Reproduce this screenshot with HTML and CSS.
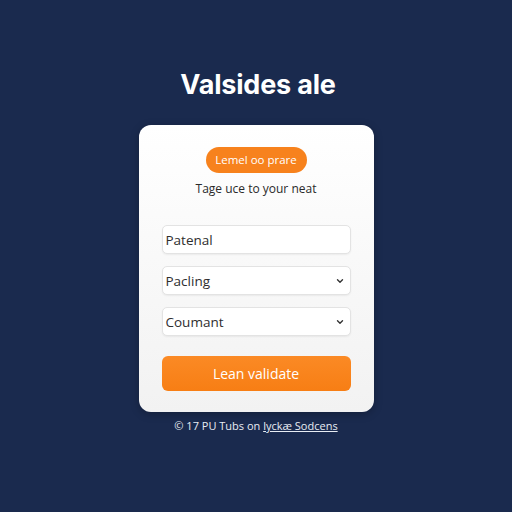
FILE: index.html
```html
<!DOCTYPE html>
<html>
<head>
<meta charset="utf-8">
<link rel="stylesheet" href="styles.css">
</head>
<body>
<main class="page">
  <h1 class="title">Valsides ale</h1>
  <section class="card">
    <span class="pill">Lemel oo prare</span>
    <p class="subtitle">Tage uce to your neat</p>
    <div class="fields">
      <div class="field">Patenal</div>
      <div class="field select">Pacling <svg class="chev" width="10" height="10" viewBox="0 0 10 10"><path d="M2.5 3.8 L5 6.3 L7.5 3.8" fill="none" stroke="#333" stroke-width="1.4" stroke-linecap="round" stroke-linejoin="round"/></svg></div>
      <div class="field select">Coumant <svg class="chev" width="10" height="10" viewBox="0 0 10 10"><path d="M2.5 3.8 L5 6.3 L7.5 3.8" fill="none" stroke="#333" stroke-width="1.4" stroke-linecap="round" stroke-linejoin="round"/></svg></div>
    </div>
    <button class="cta">Lean validate</button>
  </section>
  <p class="footer">© 17 PU Tubs on <span class="link">lyckæ Sodcens</span></p>
</main>
</body>
</html>
```
FILE: styles.css
```css
* { box-sizing: border-box; }
html, body { margin: 0; padding: 0; }
body {
  width: 512px;
  height: 512px;
  background: #1a2a4e;
  font-family: "Open Sans", "Liberation Sans", sans-serif;
  overflow: hidden;
}
.page {
  display: flex;
  flex-direction: column;
  align-items: center;
  padding-top: 69px;
}
.title {
  margin: 0 0 24px 0;
  height: 32px;
  line-height: 32px;
  font-family: "Inter", "Lato", sans-serif;
  font-weight: 700;
  font-size: 27px;
  color: #ffffff;
  letter-spacing: -0.2px;
  transform: translateX(2px);
}
.card {
  width: 235px;
  background: linear-gradient(#ffffff, #f2f2f2);
  border-radius: 12px;
  padding: 22px 23px 21px 23px;
  display: flex;
  flex-direction: column;
  align-items: center;
  box-shadow: 0 2px 8px rgba(0,0,0,0.25);
}
.pill {
  height: 26px;
  width: 101px;
  border-radius: 13px;
  background: #f7821d;
  color: #fff;
  font-size: 11.5px;
  line-height: 26px;
  text-align: center;
}
.subtitle {
  margin: 8px 0 0 0;
  height: 16px;
  line-height: 16px;
  font-size: 12px;
  color: #2a2a2a;
}
.fields {
  margin-top: 28px;
  width: 100%;
  display: flex;
  flex-direction: column;
  gap: 12px;
}
.field {
  height: 29px;
  border: 1px solid #e3e3e3;
  border-radius: 5px;
  background: #ffffff;
  box-shadow: 0 1px 2px rgba(0,0,0,0.06);
  padding: 0 5px 0 3px;
  display: flex;
  align-items: center;
  justify-content: space-between;
  font-size: 13.5px;
  color: #2e2e2e;
}
.chev { display: block; }
.cta {
  margin-top: 20px;
  width: 100%;
  height: 35px;
  border: none;
  border-radius: 6px;
  background: linear-gradient(#fb8a25, #f77e14);
  color: #fff;
  font-family: "Open Sans", "Liberation Sans", sans-serif;
  font-size: 14px;
  padding: 0;
}
.footer {
  margin: 7px 0 0 0;
  height: 14px;
  line-height: 14px;
  font-size: 11px;
  color: #e8ecf3;
}
.link { text-decoration: underline; }
```
